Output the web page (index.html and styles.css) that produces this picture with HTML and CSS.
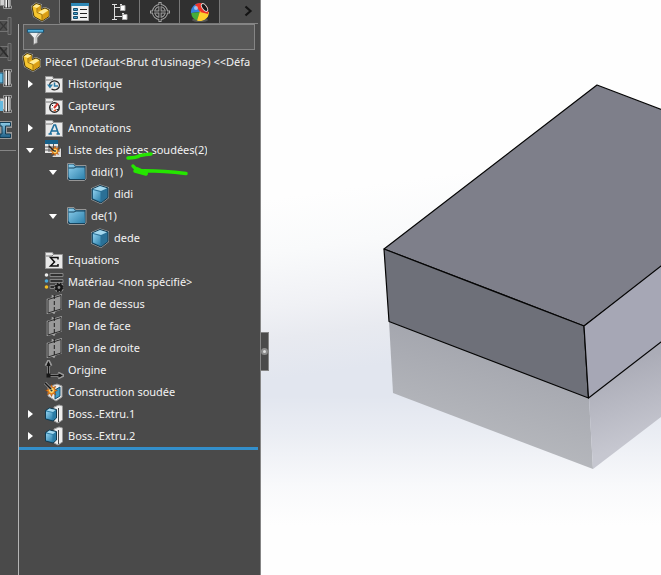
FILE: index.html
```html
<!DOCTYPE html>
<html lang="fr">
<head>
<meta charset="utf-8">
<title>Pièce1</title>
<link rel="stylesheet" href="styles.css">
</head>
<body>
<svg class="defs" aria-hidden="true">
  <defs>
    <linearGradient id="g-blue" x1="0" y1="0" x2="1" y2="1"><stop offset="0" stop-color="#8fd0ee"/><stop offset="1" stop-color="#2c80ab"/></linearGradient>
    <linearGradient id="g-beam" x1="0" y1="0" x2="0" y2="1"><stop offset="0" stop-color="#8ccbe8"/><stop offset="1" stop-color="#205f86"/></linearGradient>
    <linearGradient id="g-tube" x1="0" y1="0" x2="1" y2="0"><stop offset="0" stop-color="#777"/><stop offset=".35" stop-color="#fff"/><stop offset="1" stop-color="#888"/></linearGradient>
    <symbol id="part" viewBox="0 0 20 20">
      <path d="M2 4.500 6 1.500l5 1.500v4.500l4-1.500 4 2v6.500L12 19l-8-4.500z" fill="#a8a8a8" stroke="#a8a8a8" stroke-width="2" stroke-linejoin="round"/>
      <path d="M2 4.500 6 1.500l5 1.500v4.500l4-1.500 4 2v6.500L12 19l-8-4.500z" fill="#f7c62f" stroke="#4a3a08" stroke-linejoin="round"/>
      <path d="m3 4.500 3.500-2.200 4 1.200L7 6zM8 10.500l7-3.800 3.300 1.600L12 12.500z" fill="#ffeb96"/>
      <path d="m7 6 3.500-2.300v4.500L8 10zM12.300 12.800l6.200-4v5.500l-6.200 4z" fill="#d99d16"/>
      <path d="M7 6v4.500l5 2v6" fill="none" stroke="#8a6209" stroke-width=".8"/>
    </symbol>
    <symbol id="folder" viewBox="0 0 20 20"><path d="M1.500 18.500v-16h7l1 2h9v14z" fill="#e9e9e9" stroke="#969696"/><path d="M2 6h6l1.500-1.500" fill="none" stroke="#777"/></symbol>
    <symbol id="history" viewBox="0 0 20 20"><use href="#folder"/><path d="M5.500 11a5 4.500 0 1 1 2 4" fill="none" stroke="#222" stroke-width="1.200"/><path d="M3 10.500h6l-3 4z" fill="#2b7ca5"/><path d="M10.500 8.500v3.500h3.500" fill="none" stroke="#2b7ca5" stroke-width="1.500"/></symbol>
    <symbol id="sensor" viewBox="0 0 20 20"><use href="#folder"/><circle cx="10.500" cy="11.500" r="4.700" fill="#f8f8f8" stroke="#222" stroke-width="1.500"/><path d="M10 12 14 7.500" stroke="#d5342b" stroke-width="2"/><path d="M8 9.500h1M7.500 13h1M12.500 13.500h1.500" stroke="#222"/><path d="m9 14.500 3-1.500v2.500z" fill="#e05a28"/></symbol>
    <symbol id="annot" viewBox="0 0 20 20"><use href="#folder"/><path d="M6 16 10 7l1.500 0L14.500 16M8 13h5M4.500 16h3.500M12.500 16h3.500" fill="none" stroke="#1f6f9c" stroke-width="1.600"/></symbol>
    <symbol id="sigma" viewBox="0 0 20 20"><use href="#folder"/><path d="M14 9.500v-2H6.500l4 4.500-4 4H14v-2" fill="none" stroke="#111" stroke-width="1.500"/></symbol>
    <symbol id="burst" viewBox="0 0 20 20"><path d="m10 3 1.500 3.500L15 5l-1.500 3.500L17 10l-3.500 1.500L15 15l-3.500-1.500L10 17l-1.500-3.500L5 15l1.500-3.500L3 10l3.500-1.500L5 5l3.500 1.500z" fill="#ef8a19" stroke="#8c3d0c" stroke-width=".6"/><circle cx="10" cy="10" r="2.800" fill="#ffe680"/><circle cx="10" cy="10" r="1.300" fill="#333"/></symbol>
    <symbol id="cutlist" viewBox="0 0 20 20"><path d="M1 1h13v12H1z" fill="#e8e8e8"/><path d="M1 0h13v4H1z" fill="#16618b"/><path d="M1 7h13M1 10h13M5 4v8M9.500 4v8" stroke="#555"/><path d="M7 17.500 17.500 7v10.500z" fill="#ddd" stroke="#444"/><use href="#burst" x="4" y="4" width="14" height="14"/><path d="m5 6 5 5" stroke="#222" stroke-width="1.500"/></symbol>
    <symbol id="bluefolder" viewBox="0 0 20 20"><path d="M.5 17V1.500h6.500l1.500 2h10.500V17l-1.500 1.500H2z" fill="#16425c" stroke="#969696"/><path d="M1.500 15V2.500h5l1.500 2h9.500L18 17H3z" fill="url(#g-blue)"/><path d="M1.500 6h5.500l2-1h9" fill="none" stroke="#16425c"/></symbol>
    <symbol id="cube" viewBox="0 0 20 20"><path d="m2 5 8-3.500L18 4v9.500L11 19l-9-4z" fill="#2a7096" stroke="#a0a0a0" stroke-width="2" stroke-linejoin="round"/><path d="m2 5 8-3.500L18 4v9.500L11 19l-9-4z" fill="#2a7096" stroke="#123a50" stroke-linejoin="round"/><path d="m3 5 7-3 7 2.200L11 7z" fill="#a5d9ef"/><path d="m3 6 7.500 2v9.500L3 14.500z" fill="url(#g-blue)"/></symbol>
    <symbol id="material" viewBox="0 0 20 20"><g stroke="#858585"><path d="M6 1.500h13v3H6zM6 7.500h13v3H6zM6 13.500h8v3H6z" fill="#303030"/></g><circle cx="2.500" cy="3" r="1.800" fill="#eee"/><circle cx="2.500" cy="9" r="1.800" fill="#4ba9d8"/><circle cx="2.500" cy="15" r="1.800" fill="#f2be24"/><circle cx="15" cy="15.500" r="3.500" fill="none" stroke="#999" stroke-width="3"/><circle cx="15" cy="15.500" r="2.600" fill="#888" stroke="#181818" stroke-width="2.400"/><circle cx="15" cy="15.500" r="4" fill="none" stroke="#181818" stroke-width="1.500" stroke-dasharray="1.800 1.400"/></symbol>
    <symbol id="plane" viewBox="0 0 20 20"><path d="m3.500 5.500 5-1.500V2l2 1 6.500-2v14l-6 2-1 2-1.500-1-5 1z" fill="#888" stroke="#a6a6a6" stroke-width="1.600"/><path d="m4 5.500 13-4v13.500l-13 4z" fill="#999" stroke="#2c2c2c"/><path d="M10.300 1v18" stroke="#1d1d1d" stroke-dasharray="4 2"/></symbol>
    <symbol id="origin" viewBox="0 0 20 20"><path d="M4.500 3v12.500H17M2 6l2.500-5L7 6M14 13l5 2.500-5 2.500" fill="none" stroke="#999" stroke-width="3"/><path d="M4.500 3v12.500H17" fill="none" stroke="#171717" stroke-width="1.500"/><path d="m2.300 6 2.200-5 2.200 5zM14.500 13.300l4.500 2.200-4.500 2.200zM2.500 13.500h4v4h-4z" fill="#171717"/></symbol>
    <symbol id="weld" viewBox="0 0 20 20"><path d="m4 5 9-3 5 2v11l-6 4-8-5z" fill="#ececec" stroke="#999"/><path d="m11 8 5-3v9l-5 3z" fill="#3e99c4" stroke="#164e70"/><use href="#burst" x="-1" y="0" width="17" height="17"/><path d="m1 1 6 6" stroke="#999" stroke-width="3"/><path d="m1 1 6 6" stroke="#181818" stroke-width="1.500"/></symbol>
    <symbol id="extrude" viewBox="0 0 20 20"><path d="m10 3 5-2 3.500 1v14l-4.500 3-4-2z" fill="#eee" stroke="#999"/><path d="M14.500 4v14" stroke="#444"/><path d="m1.500 6.500 4-2.500 7 1.500v8.500L9 17l-7.500-2z" fill="#2b7ca5" stroke="#123a50"/><path d="m2.500 6.500 3-2 6 1.500L9 8z" fill="#a5d9ef"/><path d="m2 7.500 6.500 1.200v7L2 14.200z" fill="url(#g-blue)"/></symbol>
    <symbol id="tubes" viewBox="0 0 12 18"><path d="M0 3.500h6v11H0z" fill="#d0d0d0" stroke="#888"/><path d="M3.500 .5h8v2.500h-1v12h1v2.500h-8V15h1V3h-1z" fill="#303030" stroke="#999"/><path d="M4.500 1.500h2.500v15H4.500zM8 1.500h2.500v15H8z" fill="url(#g-tube)"/></symbol>
    <symbol id="sheet" viewBox="0 0 12 18"><path d="M-1 3.500h9v11h-9M8 .5h3v17H8z" fill="#4f4f4f" stroke="#737373"/><path d="m0 5 7 8M0 13l7-8" stroke="#393939" stroke-width="1.200"/></symbol>
  </defs>
</svg>

<div class="app">
  <nav class="toolbar" aria-label="Constructions soudées">
    <button class="tool tool-first" aria-label="Profilé"><svg viewBox="0 0 12 18"><use href="#tubes"/></svg></button>
    <button class="tool" aria-label="Gousset" disabled><svg viewBox="0 0 12 18"><use href="#sheet"/></svg></button>
    <button class="tool" aria-label="Cordon" disabled><svg viewBox="0 0 12 18"><use href="#sheet"/><path d="m0 4 8 10" stroke="#2c2c2c" stroke-width="1.500"/></svg></button>
    <button class="tool" aria-label="Embout"><svg viewBox="0 0 12 18"><use href="#tubes"/><path d="M0 4h3v10H0" fill="#65b9df" stroke="#174e6d"/></svg></button>
    <button class="tool" aria-label="Ajuster"><svg viewBox="0 0 12 18"><use href="#tubes"/><path d="M0 6h3v10H0z" fill="#65b9df"/></svg></button>
    <button class="tool" aria-label="Poutre"><svg viewBox="0 0 12 18"><path d="M0 1h11v5H6v6h5v5H0" fill="#999" stroke="#999" stroke-width="2"/><path d="M0 1.500h10.500V5H5.500v8h5v3.500H0V13h2V5H0z" fill="url(#g-beam)" stroke="#123c55"/></svg></button>
    <hr class="rule">
  </nav>

  <aside class="panel">
    <div class="tabs">
      <button class="tab active" aria-label="Arbre de création"><svg viewBox="0 0 20 20"><use href="#part"/></svg></button>
      <button class="tab" aria-label="Propriétés"><svg viewBox="0 0 20 20"><path d="M1.500 1.500h17v17h-17z" fill="#f2f2f2" stroke="#aaa"/><path d="M1 1h18v3H1z" fill="#2e88b6"/><path d="M3.500 6.500h4v2h-4zM3.500 10.500h4v2h-4zM3.500 14.500h4v2h-4z" fill="#4ba5d0" stroke="#164c6b"/><path d="M10 7.500h7M10 11.500h7M10 15.500h7" stroke="#222"/></svg></button>
      <button class="tab" aria-label="Configurations"><svg viewBox="0 0 20 20"><path d="M4.500 2v16M4.500 5.500H11M4.500 14.500h8M2 2.500h5M2 17.500h5" fill="none" stroke="#ddd"/><path d="M10.500 3.500H15v5h-4.500zM12.500 12.500H17v5h-4.500z" fill="#fff" stroke="#aaa"/><path d="M10 2.500h2M12 11.500h2" stroke="#ddd"/></svg></button>
      <button class="tab" aria-label="Cotes"><svg viewBox="0 0 20 20"><g fill="none"><g stroke="#a5a5a5" stroke-width="3.200"><circle cx="10" cy="10" r="6.500"/><path d="M10 0v20M0 10h20"/></g><g stroke="#222" stroke-width="1.200"><circle cx="10" cy="10" r="6.500"/><path d="M10 1v18M1 10h18"/></g></g></svg></button>
      <button class="tab" aria-label="Apparences"><svg viewBox="0 0 20 20"><ellipse cx="10" cy="18" rx="8" ry="2" fill="#555"/><path d="M10 10 1 11a9 9 0 0 1 9-10z" fill="#3481df"/><path d="M10 10 5 2.500A9 9 0 0 1 18 6z" fill="#ed3329"/><path d="M10 10 1.200 11A9 9 0 0 0 7 18.500z" fill="#45ad38"/><path d="m10 9-3 9.500A9 9 0 0 0 19 10z" fill="#ffd12d"/><path d="M10 10 16 4a9 9 0 0 1 2 8z" fill="#ed3329"/><ellipse cx="14.500" cy="5.500" rx="2.600" ry="5" transform="rotate(-35 14.500 5.500)" fill="#ddd"/><ellipse cx="14.500" cy="5.500" rx="1.800" ry="4" transform="rotate(-35 14.500 5.500)" fill="#181818"/><circle cx="6" cy="6" r="2" fill="#fff" opacity=".5"/></svg></button>
      <button class="more" aria-label="Plus d'onglets"><svg viewBox="0 0 20 20"><path d="m7.500 5.500 5 4.500-5 4.500" fill="none" stroke="#141414" stroke-width="2.200"/></svg></button>
    </div>

    <div class="body">
      <label class="filter">
        <svg viewBox="0 0 20 20"><path d="M2 4 8 11v7l4-2v-5l6-7z" fill="#eee" stroke="#777"/><path d="M11 10.500 16 5l-3-.5-3 6V17l1-1z" fill="#aaa"/><path d="M1.500 2h17v3h-17z" fill="#55b2dd" stroke="#174e6d"/></svg>
        <input type="text" aria-label="Filtrer l'arbre">
      </label>
      <div class="tree">
        <div class="row root"><svg class="icon"><use href="#part"/></svg><span class="name">Pièce1 (Défaut&lt;Brut d'usinage&gt;) &lt;&lt;Défa</span></div>
        <ul>
          <li><div class="row"><button class="toggle" aria-label="Développer"></button><svg class="icon"><use href="#history"/></svg><span class="name">Historique</span></div></li>
          <li><div class="row"><svg class="icon"><use href="#sensor"/></svg><span class="name">Capteurs</span></div></li>
          <li><div class="row"><button class="toggle" aria-label="Développer"></button><svg class="icon"><use href="#annot"/></svg><span class="name">Annotations</span></div></li>
          <li><div class="row"><button class="toggle open" aria-label="Réduire"></button><svg class="icon"><use href="#cutlist"/></svg><span class="name">Liste des pièces soudées(2)</span></div>
            <ul>
              <li><div class="row"><button class="toggle open" aria-label="Réduire"></button><svg class="icon"><use href="#bluefolder"/></svg><span class="name">didi(1)</span></div>
                <ul><li><div class="row"><svg class="icon"><use href="#cube"/></svg><span class="name">didi</span></div></li></ul></li>
              <li><div class="row"><button class="toggle open" aria-label="Réduire"></button><svg class="icon"><use href="#bluefolder"/></svg><span class="name">de(1)</span></div>
                <ul><li><div class="row"><svg class="icon"><use href="#cube"/></svg><span class="name">dede</span></div></li></ul></li>
            </ul></li>
          <li><div class="row"><svg class="icon"><use href="#sigma"/></svg><span class="name">Equations</span></div></li>
          <li><div class="row"><svg class="icon"><use href="#material"/></svg><span class="name">Matériau &lt;non spécifié&gt;</span></div></li>
          <li><div class="row"><svg class="icon"><use href="#plane"/></svg><span class="name">Plan de dessus</span></div></li>
          <li><div class="row"><svg class="icon"><use href="#plane"/></svg><span class="name">Plan de face</span></div></li>
          <li><div class="row"><svg class="icon"><use href="#plane"/></svg><span class="name">Plan de droite</span></div></li>
          <li><div class="row"><svg class="icon"><use href="#origin"/></svg><span class="name">Origine</span></div></li>
          <li><div class="row"><svg class="icon"><use href="#weld"/></svg><span class="name">Construction soudée</span></div></li>
          <li><div class="row"><button class="toggle" aria-label="Développer"></button><svg class="icon"><use href="#extrude"/></svg><span class="name">Boss.-Extru.1</span></div></li>
          <li><div class="row"><button class="toggle" aria-label="Développer"></button><svg class="icon"><use href="#extrude"/></svg><span class="name">Boss.-Extru.2</span></div></li>
        </ul>
        <div class="rollback"></div>
        <svg class="marks" viewBox="0 0 70 30" aria-hidden="true"><g fill="none" stroke="#25e600" stroke-width="3.500" stroke-linecap="round" stroke-linejoin="round"><path d="M8 9q8 0 12-2.500 6-1 11-1.500"/><path d="M13 17q3 4 13 8L15 22q22-1 51 2.500"/><path d="m17 20 9 4" stroke-width="4"/></g></svg>
      </div>
    </div>
  </aside>

  <main class="viewport">
    <svg class="scene" viewBox="0 0 400 575" preserveAspectRatio="xMinYMin slice" role="img" aria-label="Modèle 3D">
      <defs>
        <linearGradient id="sky" gradientUnits="userSpaceOnUse" x1="0" y1="200" x2="25" y2="378"><stop offset="0" stop-color="#fefefe"/><stop offset=".3" stop-color="#f9fafb"/><stop offset=".6" stop-color="#f0f1f5"/><stop offset=".78" stop-color="#e8eaf0"/><stop offset="1" stop-color="#e2e6ef"/></linearGradient>
        <linearGradient id="ground" gradientUnits="userSpaceOnUse" x1="0" y1="395" x2="0" y2="525"><stop offset="0" stop-color="#fefefe" stop-opacity="0"/><stop offset=".3" stop-color="#fefefe" stop-opacity=".3"/><stop offset=".7" stop-color="#fefefe" stop-opacity=".8"/><stop offset="1" stop-color="#fefefe"/></linearGradient>
        <linearGradient id="mirror-front" gradientUnits="userSpaceOnUse" x1="225" y1="345" x2="200" y2="435"><stop offset="0" stop-color="#a4a6ae"/><stop offset="1" stop-color="#b5b7bc"/></linearGradient>
        <linearGradient id="mirror-side" gradientUnits="userSpaceOnUse" x1="345" y1="370" x2="370" y2="445"><stop offset="0" stop-color="#abacb7"/><stop offset="1" stop-color="#c6c7d0"/></linearGradient>
      </defs>
      <path d="M0 0h1600v2300H0z" fill="url(#sky)"/>
      <path d="M0 395h1600v1905H0z" fill="url(#ground)"/>
      <path d="m128 321 200 77 4 71-200-76z" fill="url(#mirror-front)"/>
      <path d="m328 398 212-164v76L332 469z" fill="url(#mirror-side)"/>
      <g stroke="#050505" stroke-width="1.200" stroke-linejoin="round">
        <path d="m123 249 213-164 204 78-217 163z" fill="#7e7f8a"/>
        <path d="m123 249 200 77 4.500 72L128 321.500z" fill="#6e7079"/>
        <path d="m323 326 217-169v77L327.500 398z" fill="#a6a7b5"/>
      </g>
    </svg>
    <button class="handle" aria-label="Réduire le panneau"></button>
  </main>
</div>
</body>
</html>
```
FILE: styles.css
```css
*, *::before { box-sizing: border-box; }

body {
  margin: 0;
  background: #fefefe;
  color: #f2f2f2;
  font: 11px/22px "Noto Sans", "Open Sans", sans-serif;
}

button {
  margin: 0;
  padding: 0;
  border: 0;
  background: none;
  font: inherit;
}

ul { margin: 0; padding: 0; list-style: none; }

.defs { position: absolute; width: 0; height: 0; }

.app { display: flex; min-height: 100vh; }

/* Clipped tool strip */
.toolbar {
  display: flex;
  flex: 0 0 18px;
  flex-direction: column;
  overflow: hidden;
  background: #4a4a4a;
}
.tool { display: flex; align-items: center; height: 26px; }
.tool-first { height: 13px; align-items: flex-end; padding-bottom: 4px; }
.tool svg { flex: none; width: 12px; height: 18px; }
.rule { width: 16px; height: 1px; margin: 7px 0 0; border: 0; background: #858585; }

/* Feature manager */
.panel {
  display: flex;
  flex: 0 0 243px;
  flex-direction: column;
  min-width: 0;
  border-right: 1px solid #858585;
  background: #4a4a4a;
}
.tabs { display: flex; height: 24px; padding: 0 2px; }
.tab {
  display: flex;
  flex: 0 0 40px;
  align-items: center;
  justify-content: center;
  border: solid #777;
  border-width: 0 1px 1px 0;
  background: #303030;
}
.tab.active { border-bottom-color: #4a4a4a; background: #4a4a4a; }
.tab svg { width: 20px; height: 20px; }
.more {
  flex: 1;
  border-bottom: 1px solid #858585;
  text-align: right;
}
.more svg { width: 20px; height: 20px; vertical-align: top; }

.body {
  flex: 1;
  padding: 0 2px 0 0;
  border-left: 1px solid #b5b5b5;
}
.filter {
  display: flex;
  align-items: center;
  height: 26px;
  margin: 0 3px 0 4px;
  padding: 0 2px;
  border: 1px solid #858585;
  background: #585858;
}
.filter svg { flex: none; width: 19px; height: 20px; }
.filter input {
  flex: 1;
  min-width: 0;
  border: 0;
  outline: 0;
  background: none;
  color: inherit;
  font: inherit;
}

.tree { position: relative; padding-top: 1px; }
.tree ul ul { padding-left: 23px; }
.row {
  display: flex;
  align-items: center;
  justify-content: flex-start;
  height: 22px;
  padding-left: 25px;
}
.row.root { padding-left: 2px; }
.row:has(.toggle) { padding-left: 4px; }
.icon { flex: none; width: 20px; height: 20px; margin-right: 4px; }
.name { overflow: hidden; white-space: nowrap; }
.toggle { display: grid; flex: none; place-items: center; width: 14px; height: 14px; margin-right: 7px; }
.toggle::before {
  border: solid transparent;
  border-width: 4px 0 4px 5px;
  border-left-color: #fff;
  content: "";
}
.toggle.open::before {
  border-width: 5px 4px 0;
  border-color: #fff transparent transparent;
}
.rollback { height: 3px; background: #338fcb; }

/* Highlighter strokes over the cut list */
.marks { position: absolute; top: 99px; left: 101px; width: 70px; height: 30px; pointer-events: none; }

/* Graphics area */
.viewport { position: relative; flex: 1; min-width: 0; overflow: hidden; }
.scene { position: absolute; inset: 0; width: 100%; height: 100%; }
.handle {
  position: absolute;
  top: 332px;
  left: 0;
  display: grid;
  place-items: center;
  width: 8px;
  height: 39px;
  border: 1px solid #858585;
  border-left: 0;
  background: #4a4a4a;
}
.handle::before {
  width: 7px;
  height: 7px;
  border: 2px solid #8c8c8c;
  border-radius: 50%;
  background: #ddd;
  content: "";
}
```
